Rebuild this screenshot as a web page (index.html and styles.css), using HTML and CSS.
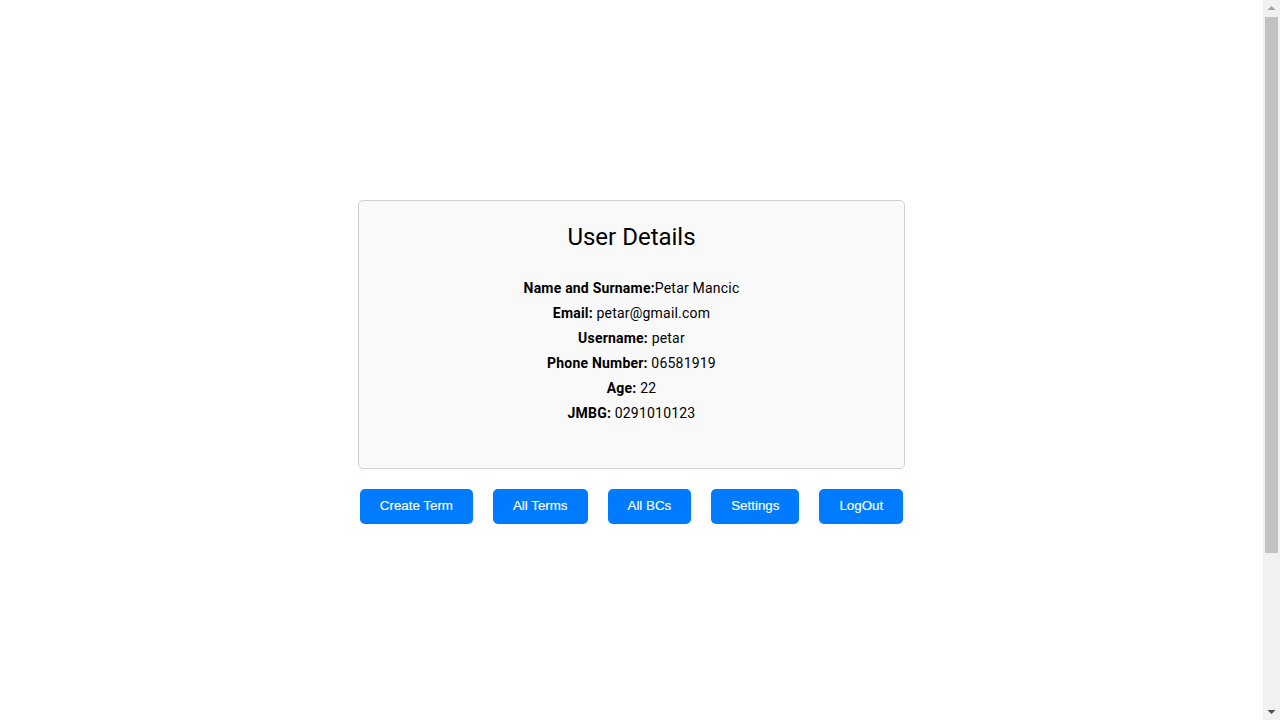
FILE: index.html
```html
<!DOCTYPE html>
<html lang="en">
<head>
<meta charset="utf-8">
<title>User Details</title>
<link rel="stylesheet" href="styles.css">
</head>
<body>
<div class="window">
  <main class="page">
    <div class="card">
      <h2 class="title">User Details</h2>
      <div class="fields">
        <p class="field"><b>Name and Surname:</b>Petar Mancic</p>
        <p class="field"><b>Email:</b> petar@gmail.com</p>
        <p class="field"><b>Username:</b> petar</p>
        <p class="field"><b>Phone Number:</b> 06581919</p>
        <p class="field"><b>Age:</b> 22</p>
        <p class="field"><b>JMBG:</b> 0291010123</p>
      </div>
    </div>
    <div class="actions">
      <button class="btn">Create Term</button>
      <button class="btn">All Terms</button>
      <button class="btn">All BCs</button>
      <button class="btn">Settings</button>
      <button class="btn">LogOut</button>
    </div>
  </main>
  <div class="scrollbar" aria-hidden="true">
    <div class="sb-btn">
      <svg width="17" height="17" viewBox="0 0 17 17"><polygon points="4.5,10 12.5,10 8.5,6" fill="#a3a3a3"/></svg>
    </div>
    <div class="sb-track">
      <div class="sb-thumb"></div>
    </div>
    <div class="sb-btn">
      <svg width="17" height="17" viewBox="0 0 17 17"><polygon points="4.5,7 12.5,7 8.5,11" fill="#505050"/></svg>
    </div>
  </div>
</div>
</body>
</html>
```
FILE: styles.css
```css
html, body {
  margin: 0;
  padding: 0;
  background: #ffffff;
}
body {
  font-family: Roboto, "Liberation Sans", Arial, sans-serif;
  color: #000;
}
.window {
  display: flex;
  height: 720px;
  overflow: hidden;
}
.page {
  flex: 1;
  display: flex;
  flex-direction: column;
  align-items: center;
  padding-top: 200px;
}
.scrollbar {
  width: 17px;
  flex: none;
  display: flex;
  flex-direction: column;
  background: #f1f1f1;
}
.sb-btn {
  height: 17px;
  flex: none;
}
.sb-btn svg {
  display: block;
}
.sb-track {
  flex: 1;
}
.sb-thumb {
  margin: 0 2px;
  height: 536px;
  background: #c1c1c1;
}
.card {
  box-sizing: border-box;
  width: 547px;
  height: 269px;
  border: 1px solid #d0d0d0;
  border-radius: 5px;
  background: #f9f9f9;
  padding: 20px 20px;
  text-align: center;
}
.title {
  margin: 0;
  font-size: 24px;
  font-weight: 400;
  line-height: 32px;
}
.fields {
  margin-top: 23px;
}
.field {
  margin: 0;
  font-size: 14px;
  line-height: 25px;
  letter-spacing: 0.2px;
}
.field b {
  font-weight: 700;
}
.actions {
  display: flex;
  gap: 20px;
  margin-top: 20px;
}
.btn {
  font-family: "Liberation Sans", Arial, sans-serif;
  font-size: 13.333px;
  color: #fff;
  -webkit-text-stroke: 0.15px #fff;
  background: #007bff;
  border: none;
  border-radius: 5px;
  padding: 9px 20px 11px;
  cursor: pointer;
}
```
